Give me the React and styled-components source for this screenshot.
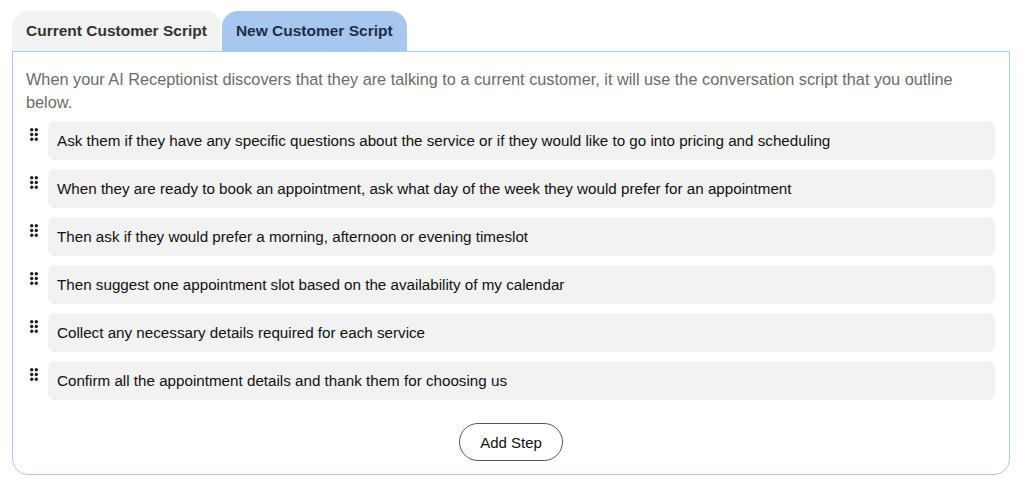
import React from "react";
import styled, {createGlobalStyle} from "styled-components";

const Global = createGlobalStyle`
  body {
    margin: 0;
    background: #ffffff;
    font-family: "Liberation Sans", Arial, sans-serif;
  }
`

const Wrapper = styled.div`
  padding: 11px 14px 15px 12px;
`

const Tabs = styled.div`
  display: flex;
  gap: 1px;
`

const Tab = styled.button`
  height: 40px;
  padding: 0 14px;
  border: none;
  border-radius: 16px 16px 0 0;
  font-family: inherit;
  font-size: 15.5px;
  font-weight: 700;
  background: ${p => p.active ? '#a7c7ee' : '#f2f2f2'};
  color: ${p => p.active ? '#1d2d4a' : '#333333'};
  cursor: pointer;
`

const Panel = styled.div`
  border: 1px solid #a9c8f3;
  border-radius: 0 0 16px 16px;
  padding: 16px 13px 13px 13px;
  display: flex;
  flex-direction: column;
`

const Intro = styled.p`
  margin: 0 0 7px 0;
  font-size: 16.3px;
  line-height: 23px;
  color: #6b6b6b;
`

const Steps = styled.div`
  display: flex;
  flex-direction: column;
  gap: 9px;
`

const Step = styled.div`
  display: flex;
  align-items: flex-start;
`

const Handle = styled.span`
  display: flex;
  width: 22px;
  padding: 7px 0 0 4px;
  box-sizing: border-box;
  flex-shrink: 0;
`

const StepBox = styled.div`
  flex: 1;
  margin-right: 1px;
  height: 39px;
  display: flex;
  align-items: center;
  padding: 0 9px;
  background: #f2f2f2;
  border-radius: 7px;
  font-size: 15.2px;
  color: #111111;
`

const AddButton = styled.button`
  align-self: center;
  margin-top: 23px;
  width: 104px;
  height: 38px;
  border: 1.5px solid #555555;
  border-radius: 20px;
  background: #ffffff;
  font-family: inherit;
  font-size: 15px;
  color: #111111;
`

const steps = [
    'Ask them if they have any specific questions about the service or if they would like to go into pricing and scheduling',
    'When they are ready to book an appointment, ask what day of the week they would prefer for an appointment',
    'Then ask if they would prefer a morning, afternoon or evening timeslot',
    'Then suggest one appointment slot based on the availability of my calendar',
    'Collect any necessary details required for each service',
    'Confirm all the appointment details and thank them for choosing us',
]

function Grip() {
    return (
        <svg width="8" height="13" viewBox="0 0 8 13">
            {[1.7, 6.3].map(x => [1.7, 6.5, 11.3].map(y => (
                <circle key={`${x}-${y}`} cx={x} cy={y} r="1.7" fill="#222"/>
            )))}
        </svg>
    )
}

export default function App() {
    return (
        <Wrapper>
            <Global/>
            <Tabs>
                <Tab>Current Customer Script</Tab>
                <Tab active>New Customer Script</Tab>
            </Tabs>
            <Panel>
                <Intro>
                    When your AI Receptionist discovers that they are talking to a current customer, it will use the conversation script that you outline below.
                </Intro>
                <Steps>
                    {steps.map(s => (
                        <Step key={s}>
                            <Handle><Grip/></Handle>
                            <StepBox>{s}</StepBox>
                        </Step>
                    ))}
                </Steps>
                <AddButton>Add Step</AddButton>
            </Panel>
        </Wrapper>
    )
}
